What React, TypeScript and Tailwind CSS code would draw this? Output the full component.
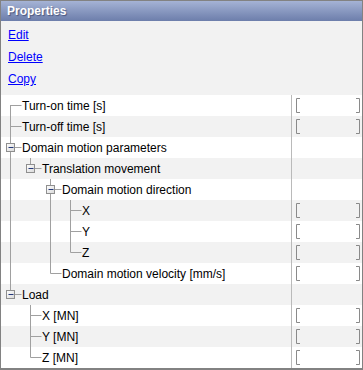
import React from 'react';

interface Row {
  label: string;
  level: number;
  expandable?: boolean;
  last?: boolean;
  firstRoot?: boolean;
  // levels of ancestors whose line keeps running through this row
  through: number[];
  value?: boolean;
}

const rows: Row[] = [
  { label: 'Turn-on time [s]', level: 0, firstRoot: true, through: [], value: true },
  { label: 'Turn-off time [s]', level: 0, through: [], value: true },
  { label: 'Domain motion parameters', level: 0, expandable: true, through: [] },
  { label: 'Translation movement', level: 1, expandable: true, last: true, through: [0] },
  { label: 'Domain motion direction', level: 2, expandable: true, through: [0] },
  { label: 'X', level: 3, through: [0, 2], value: true },
  { label: 'Y', level: 3, through: [0, 2], value: true },
  { label: 'Z', level: 3, last: true, through: [0, 2], value: true },
  { label: 'Domain motion velocity [mm/s]', level: 2, last: true, through: [0], value: true },
  { label: 'Load', level: 0, expandable: true, last: true, through: [] },
  { label: 'X [MN]', level: 1, through: [], value: true },
  { label: 'Y [MN]', level: 1, through: [], value: true },
  { label: 'Z [MN]', level: 1, last: true, through: [], value: true },
];

const LINE = '#a0a0a0';

// Tree connectors for one row (svg origin sits 1px right of the outer border)
const Guides: React.FC<{ row: Row }> = ({ row }) => {
  const cx = 9.5 + row.level * 20;
  const width = 21 + row.level * 20;
  const top = row.firstRoot ? 10 : 0;
  const bottom = row.last ? 10.5 : 21;
  return (
    <svg width={width} height={21} className="shrink-0">
      {row.through.map((l) => (
        <line key={l} x1={9.5 + l * 20} y1={0} x2={9.5 + l * 20} y2={21} stroke={LINE} />
      ))}
      <line x1={cx} y1={top} x2={cx} y2={bottom} stroke={LINE} />
      <line x1={cx} y1={10.5} x2={cx + 11} y2={10.5} stroke={LINE} />
      {row.expandable && (
        <g>
          <defs>
            <linearGradient id="box" x1="0" y1="0" x2="1" y2="1">
              <stop offset="0" stopColor="#ffffff" />
              <stop offset="1" stopColor="#d8d8d8" />
            </linearGradient>
          </defs>
          <rect x={cx - 4} y={6.5} width={8} height={8} fill="url(#box)" stroke="#8f8f8f" />
          <line x1={cx - 2} y1={10.5} x2={cx + 3} y2={10.5} stroke="#24387a" />
        </g>
      )}
    </svg>
  );
};

const Bracket: React.FC = () => (
  <svg width={64} height={15} className="shrink-0">
    <path d="M4 0.5H0.5V14.5H4" fill="none" stroke="#8a8a8a" />
    <path d="M60 0.5H63.5V14.5H60" fill="none" stroke="#8a8a8a" />
  </svg>
);

export default function App() {
  return (
    <div
      className="w-[363px] h-[370px] border border-b-2 border-[#828282] bg-white flex flex-col text-[12px] text-black overflow-hidden"
      style={{ fontFamily: '"Liberation Sans", Arial, sans-serif' }}
    >
      {/* Title bar */}
      <div className="h-[20px] shrink-0 flex items-center pl-[6px] bg-gradient-to-b from-[#a5b3d5] to-[#6d7eab]">
        <span className="font-bold text-white [text-shadow:1px_1px_1px_rgba(40,50,90,0.6)]">Properties</span>
      </div>

      {/* Actions */}
      <div className="h-[74px] shrink-0 bg-[#f2f2f2] pl-[7px] pt-[3px] flex flex-col">
        {['Edit', 'Delete', 'Copy'].map((a) => (
          <a key={a} href="#" className="leading-[22px] text-[#0000ff] underline w-fit">
            {a}
          </a>
        ))}
      </div>

      {/* Property grid */}
      <div className="flex flex-col">
        {rows.map((row, i) => (
          <div key={i} className={`h-[21px] flex ${i % 2 === 1 ? 'bg-[#f2f2f2]' : 'bg-white'}`}>
            <div className="w-[290px] flex items-center whitespace-nowrap overflow-hidden">
              <Guides row={row} />
              <span>{row.label}</span>
            </div>
            <div className="flex-1 border-l border-[#bababa] flex items-center pl-[4px]">
              {row.value && <Bracket />}
            </div>
          </div>
        ))}
      </div>
    </div>
  );
}
